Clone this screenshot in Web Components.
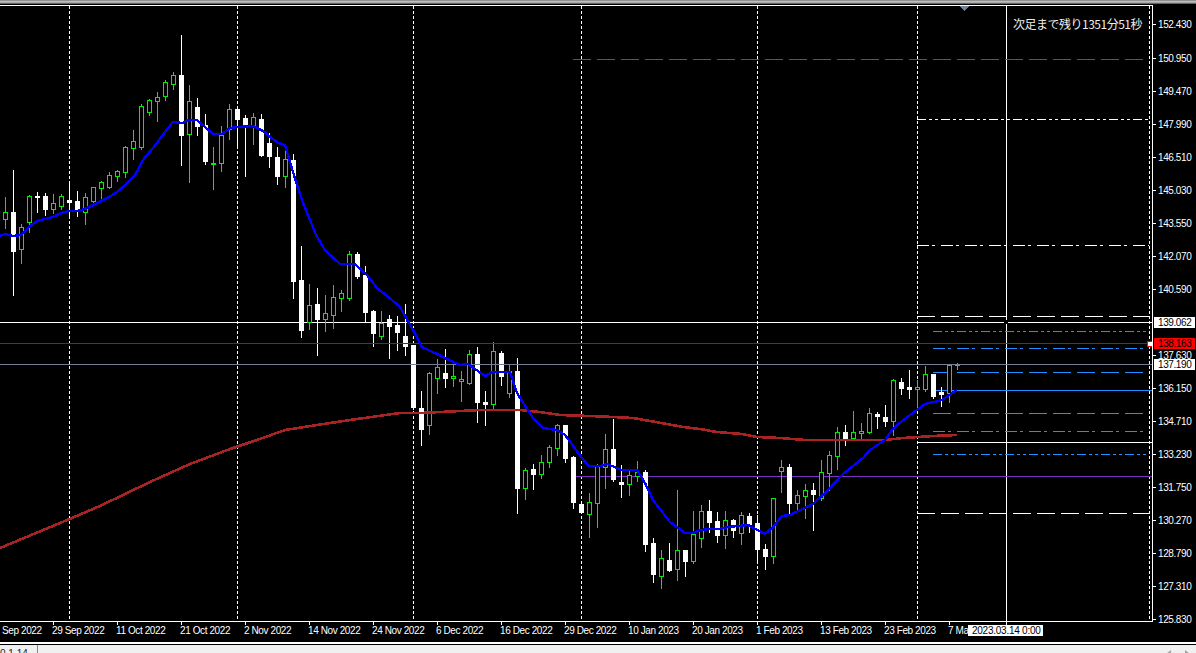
<!DOCTYPE html>
<html lang="ja">
<head>
<meta charset="utf-8">
<title>USDJPY Daily</title>
<style>
  html, body { margin: 0; background: #000; overflow: hidden; }
</style>
</head>
<body>
<mt-terminal>
  <candle-chart slot="chart"></candle-chart>
  <price-scale slot="prices"></price-scale>
  <time-scale slot="times"></time-scale>
  <status-strip slot="status"></status-strip>
</mt-terminal>

<script>
// every y below is a pixel row of the window, x = 5 + 8 * index
// [high, body top, body bottom, low, kind]
const CANDLES = [
  [197,212,219,228,'g'],[170,212,251,295,'w'],[224,227,249,263,'g'],[195,196,222,232,'g'],
  [192,196,197,212,'w'],[193,196,209,215,'w'],[194,203,209,213,'g'],[194,196,206,209,'g'],
  [183,200,202,217,'w'],[191,201,210,216,'w'],[193,197,212,224,'g'],[187,187,201,203,'g'],
  [181,182,188,199,'g'],[172,175,187,188,'g'],[170,171,176,181,'g'],[146,147,172,177,'g'],
  [130,141,148,159,'g'],[104,106,147,149,'g'],[99,100,112,115,'g'],[92,97,101,121,'g'],
  [80,82,96,100,'g'],[72,75,84,89,'g'],[35,75,135,165,'w'],[85,101,134,182,'g'],
  [98,107,126,135,'w'],[114,125,161,164,'w'],[147,163,164,189,'g'],[126,135,163,171,'g'],
  [104,109,129,139,'g'],[108,109,119,147,'w'],[115,118,126,176,'w'],[113,117,126,144,'g'],
  [114,119,155,156,'w'],[133,143,156,167,'w'],[147,157,176,184,'w'],[150,159,176,187,'g'],
  [154,160,281,298,'w'],[246,280,330,337,'w'],[284,305,322,329,'g'],[288,304,319,355,'w'],
  [295,313,319,331,'g'],[285,297,315,328,'g'],[290,293,298,311,'g'],[251,254,298,300,'g'],
  [252,254,276,278,'w'],[266,275,312,321,'w'],[310,311,333,346,'w'],[311,323,336,339,'g'],
  [315,319,326,358,'w'],[316,325,332,350,'w'],[304,336,346,355,'w'],[345,345,407,409,'w'],
  [391,408,429,445,'w'],[372,373,425,434,'g'],[359,367,378,393,'g'],[349,373,378,387,'w'],
  [364,376,378,386,'g'],[371,379,381,401,'g'],[350,354,383,384,'g'],[347,354,402,422,'w'],
  [391,402,404,425,'w'],[342,351,404,409,'g'],[351,353,376,385,'w'],[365,371,393,397,'g'],
  [358,371,488,513,'w'],[468,470,488,499,'g'],[464,469,474,489,'w'],[455,462,474,478,'g'],
  [445,447,462,467,'g'],[424,425,448,455,'g'],[425,425,458,462,'w'],[456,457,502,508,'w'],
  [503,504,512,512,'w'],[493,502,514,537,'g'],[464,465,503,527,'g'],[434,449,467,488,'g'],
  [419,449,479,481,'w'],[465,482,484,497,'w'],[471,475,484,495,'g'],[461,472,476,481,'g'],
  [470,472,544,551,'w'],[538,543,574,582,'w'],[550,558,576,588,'g'],[543,560,570,571,'w'],
  [490,550,569,580,'g'],[550,550,561,576,'w'],[511,534,561,563,'g'],[505,511,538,547,'g'],
  [500,511,522,532,'w'],[512,521,535,542,'w'],[511,520,535,548,'g'],[519,520,530,537,'w'],
  [512,515,533,544,'g'],[513,516,524,532,'w'],[515,523,549,560,'w'],[544,549,556,569,'w'],
  [498,498,556,563,'g'],[460,467,471,492,'g'],[464,467,503,513,'w'],[490,495,503,509,'g'],
  [484,490,496,518,'g'],[483,490,494,530,'w'],[460,472,498,500,'g'],[451,455,473,490,'g'],
  [427,432,456,469,'g'],[425,432,438,445,'w'],[411,432,438,438,'g'],[423,431,433,438,'g'],
  [408,413,432,433,'g'],[412,414,416,428,'w'],[405,417,421,426,'w'],[379,380,421,435,'g'],
  [378,382,388,394,'w'],[370,387,389,398,'w'],[380,387,389,410,'g'],[366,374,389,391,'g'],
  [374,374,396,398,'w'],[387,392,394,406,'w'],[365,365,393,402,'g'],[363,364,365,369,'g']
];

const FAST_MA = '0,236 5,234 13,236 21,235 29,227 37,221 45,219 53,217 61,213 69,211 77,211 85,209 93,205 101,201 109,197 117,192 125,185 135,175 143,160 157,143 165,132 173,122 183,123 188,120 197,120 213,134 222,134 230,128 238,127 253,126 263,131 278,143 285,145 293,172 302,200 310,220 317,237 325,250 340,264 355,264 367,275 377,288 392,300 400,307 413,330 422,347 437,354 447,359 460,365 468,364 485,376 492,372 510,372 517,393 533,418 543,428 557,430 565,435 582,458 589,466 600,466 607,464 622,470 637,470 645,483 653,500 670,522 685,533 693,533 700,530 710,529 720,529 728,527 748,525 765,534 773,527 782,516 790,515 813,504 828,490 843,474 863,458 870,450 885,440 893,429 902,421 917,410 925,404 942,400 957,390';
const SLOW_MA = '0,548 60,523 100,506 150,482 190,464 230,449 257,440 285,430 317,425 350,420 400,413 420,413 460,411 480,410 520,410 540,412 560,415 590,416 613,417 633,418 667,424 683,427 700,429 717,432 742,434 757,437 780,438 805,440 885,440 903,438 933,436 957,435';

const WHITE = '#fff', BLUE = '#1e90ff', PURPLE = '#7b2fc4';
const DASH = '18 6', DASH_DOT = '12 3 3 6', DASH_DOTS = '9 3 3 3 3 3';

// drawn under the candles: [y, x1, x2, colour, dash]
const LEVELS = [
  [59, 573, 1149, PURPLE, DASH],
  [119, 917, 1149, WHITE, DASH_DOTS],
  [245, 917, 1149, WHITE, DASH_DOT],
  [316, 917, 1149, WHITE, DASH],
  [322, 0, 1152, WHITE, ''],
  [331, 933, 1149, BLUE, DASH_DOTS],
  [348, 933, 1149, BLUE, DASH_DOT],
  [372, 933, 1149, BLUE, DASH],
  [390, 933, 1152, BLUE, ''],
  [413, 933, 1149, BLUE, DASH],
  [431, 933, 1149, BLUE, DASH_DOT],
  [442, 917, 1152, WHITE, ''],
  [454, 933, 1149, BLUE, DASH_DOTS],
  [476, 573, 1152, PURPLE, ''],
  [513, 917, 1149, WHITE, DASH]
];

const GRID_X = [69, 237, 413, 581, 757, 917, 1149];

const PRICES = [
  ['152.430', 24], ['150.950', 58], ['149.470', 91], ['147.990', 124], ['146.510', 157],
  ['145.030', 190], ['143.550', 223], ['142.070', 256], ['140.590', 289], ['137.630', 355],
  ['136.150', 388], ['134.710', 421], ['133.230', 454], ['131.750', 487], ['130.270', 520],
  ['128.790', 553], ['127.310', 586], ['125.830', 619]
];
const FLAGS = [
  ['139.062', 322, '#fff'],
  ['138.163', 343, '#f00'],
  ['137.190', 364, '#fff']
];

const DATES = ['29 Sep 2022', '11 Oct 2022', '21 Oct 2022', '2 Nov 2022', '14 Nov 2022', '24 Nov 2022',
  '6 Dec 2022', '16 Dec 2022', '29 Dec 2022', '10 Jan 2023', '20 Jan 2023', '1 Feb 2023',
  '13 Feb 2023', '23 Feb 2023', '7 Ma'];

const SCALE_FONT = `font: 10px "Liberation Sans", Arial, sans-serif; letter-spacing: -0.4px;`;

class MtTerminal extends HTMLElement {
  connectedCallback() {
    this.attachShadow({ mode: 'open' });
    this.shadowRoot.innerHTML = `
      <style>
        :host {
          display: grid;
          grid-template-columns: 1153px 43px;
          grid-template-rows: 4px 618px 20px 11px;
          width: 1196px;
          height: 653px;
          background: #000;
          overflow: hidden;
        }
        .title {
          grid-column: 1 / 3;
          background: linear-gradient(#777, #ccc 45%, #777 85%, #000);
        }
        .times, .status { grid-column: 1 / 3; display: block; min-width: 0; }
      </style>
      <div class="title"></div>
      <slot name="chart"></slot>
      <slot name="prices"></slot>
      <div class="times"><slot name="times"></slot></div>
      <div class="status"><slot name="status"></slot></div>
    `;
  }
}

class CandleChart extends HTMLElement {
  line(y, x1, x2, color, dash) {
    return `<line x1="${x1}" x2="${x2}" y1="${y + 0.5}" y2="${y + 0.5}" stroke="${color}" ${dash ? `stroke-dasharray="${dash}"` : ''}/>`;
  }

  candle(c, i) {
    const x = 3 + 8 * i;
    const [high, top, bottom, low, kind] = c;
    const color = kind === 'g' ? '#00f000' : '#fff';
    const h = bottom - top + 1;
    let out = `<rect x="${x + 2}" y="${high}" width="1" height="${low - high + 1}" fill="${color}"/>`;
    out += `<rect x="${x}" y="${top}" width="5" height="${h}" fill="${color}"/>`;
    if (kind === 'g' && h > 2) {
      out += `<rect x="${x + 1}" y="${top + 1}" width="3" height="${h - 2}" fill="#000"/>`;
    }
    return out;
  }

  connectedCallback() {
    this.attachShadow({ mode: 'open' });
    const grid = GRID_X.map(x =>
      `<line x1="${x + 0.5}" x2="${x + 0.5}" y1="6" y2="621" stroke="#fff" stroke-dasharray="3 2"/>`).join('');
    const levels = LEVELS.map(l => this.line(...l)).join('');
    const candles = CANDLES.map((c, i) => this.candle(c, i)).join('');

    this.shadowRoot.innerHTML = `
      <style>
        :host { display: block; position: relative; width: 1153px; height: 618px; background: #000; }
        svg { display: block; shape-rendering: crispEdges; }
        .countdown {
          position: absolute;
          left: 1013px;
          top: 11px;
          color: #eee;
          font: 12px/18px "Noto Sans CJK JP", "Liberation Sans", sans-serif;
          letter-spacing: -0.5px;
          white-space: nowrap;
        }
      </style>
      <svg width="1153" height="618" viewBox="0 4 1153 618" fill="none">
        ${grid}
        <line x1="1006.5" x2="1006.5" y1="6" y2="621" stroke="#fff"/>
        ${levels}
        ${candles}
        ${this.line(343, 0, 1152, '#d00000', '')}
        ${this.line(364, 0, 1152, '#708090', '')}
        <polyline points="${SLOW_MA}" stroke="#a82424" stroke-width="2.6"/>
        <polyline points="${FAST_MA}" stroke="#0000ff" stroke-width="2.4"/>
        <rect x="1004" y="320" width="4" height="4" fill="#000"/>
        <rect x="1147" y="341" width="5" height="5" fill="#fff" stroke="#f00" stroke-width="1"/>
        <polygon points="960,6 969,6 964.5,11" fill="#708090"/>
        ${this.line(5, 0, 1152, '#fff', '')}
        ${this.line(621, 0, 1152, '#fff', '')}
        <line x1="1152.5" x2="1152.5" y1="5" y2="622" stroke="#fff"/>
      </svg>
      <div class="countdown">次足まで残り1351分51秒</div>
    `;
  }
}

class PriceScale extends HTMLElement {
  connectedCallback() {
    this.attachShadow({ mode: 'open' });
    const ticks = PRICES.map(([text, y]) =>
      `<span class="tick" style="top:${y - 4}px"></span><span class="price" style="top:${y - 4}px">${text}</span>`).join('');
    const flags = FLAGS.map(([text, y, bg]) =>
      `<span class="flag" style="top:${y - 9}px;background:${bg}">${text}</span>`).join('');
    this.shadowRoot.innerHTML = `
      <style>
        :host { display: block; position: relative; width: 43px; height: 618px; color: #fff; ${SCALE_FONT} }
        .tick { position: absolute; left: 0; width: 3px; height: 1px; background: #fff; }
        .price { position: absolute; left: 5px; margin-top: -5px; line-height: 12px; }
        .flag {
          position: absolute;
          left: 1px;
          width: 37px;
          height: 11px;
          padding-left: 4px;
          line-height: 11px;
          color: #000;
        }
      </style>
      ${ticks}${flags}
    `;
  }
}

class TimeScale extends HTMLElement {
  connectedCallback() {
    this.attachShadow({ mode: 'open' });
    const cells = DATES.map(d => `<div class="cell"><i></i><span>${d}</span></div>`).join('');
    this.shadowRoot.innerHTML = `
      <style>
        :host { display: block; position: relative; height: 20px; color: #fff; ${SCALE_FONT} overflow: hidden; }
        .row { display: flex; }
        .first { flex: 0 0 51px; padding: 3px 0 0 2px; line-height: 12px; }
        .cell { flex: 0 0 64px; position: relative; padding-top: 3px; line-height: 12px; white-space: nowrap; }
        .cell i { position: absolute; left: 0; top: 0; width: 1px; height: 3px; background: #fff; }
        .cell span { margin-left: -1px; display: inline-block; }
        .cursor {
          position: absolute;
          left: 968px;
          top: 3px;
          width: 71px;
          height: 11px;
          padding-left: 4px;
          background: #fff;
          color: #000;
          line-height: 11px;
          letter-spacing: -0.25px;
          white-space: nowrap;
        }
        .cursor-tick { position: absolute; left: 1006px; top: 0; width: 1px; height: 3px; background: #fff; }
      </style>
      <div class="row"><div class="first">Sep 2022</div>${cells}</div>
      <div class="cursor-tick"></div>
      <div class="cursor">2023.03.14 0:00</div>
    `;
  }
}

class StatusStrip extends HTMLElement {
  connectedCallback() {
    this.attachShadow({ mode: 'open' });
    this.shadowRoot.innerHTML = `
      <style>
        :host {
          display: flex;
          height: 9px;
          border-top: 2px solid #fff;
          background: #f0f0f0;
          overflow: hidden;
          position: relative;
          color: #222;
          font: 10px/12px "Liberation Sans", Arial, sans-serif;
        }
        .gap { height: 1px; background: #000; position: absolute; left: 0; right: 0; top: 0; }
        .page { width: 38px; padding-top: 4px; border-right: 1px solid #888; box-sizing: border-box; height: 12px; }
        .arrows { margin-left: auto; margin-right: 6px; display: flex; gap: 14px; padding-top: 6px; }
      </style>
      <div class="gap"></div>
      <div class="page">0.1.14</div>
      <div class="arrows">
        <svg width="5" height="8" viewBox="0 0 5 8"><polygon points="5,0 5,8 0,4" fill="#a0a0a0"/></svg>
        <svg width="5" height="8" viewBox="0 0 5 8"><polygon points="0,0 0,8 5,4" fill="#a0a0a0"/></svg>
      </div>
    `;
  }
}

customElements.define('mt-terminal', MtTerminal);
customElements.define('candle-chart', CandleChart);
customElements.define('price-scale', PriceScale);
customElements.define('time-scale', TimeScale);
customElements.define('status-strip', StatusStrip);
</script>
</body>
</html>
